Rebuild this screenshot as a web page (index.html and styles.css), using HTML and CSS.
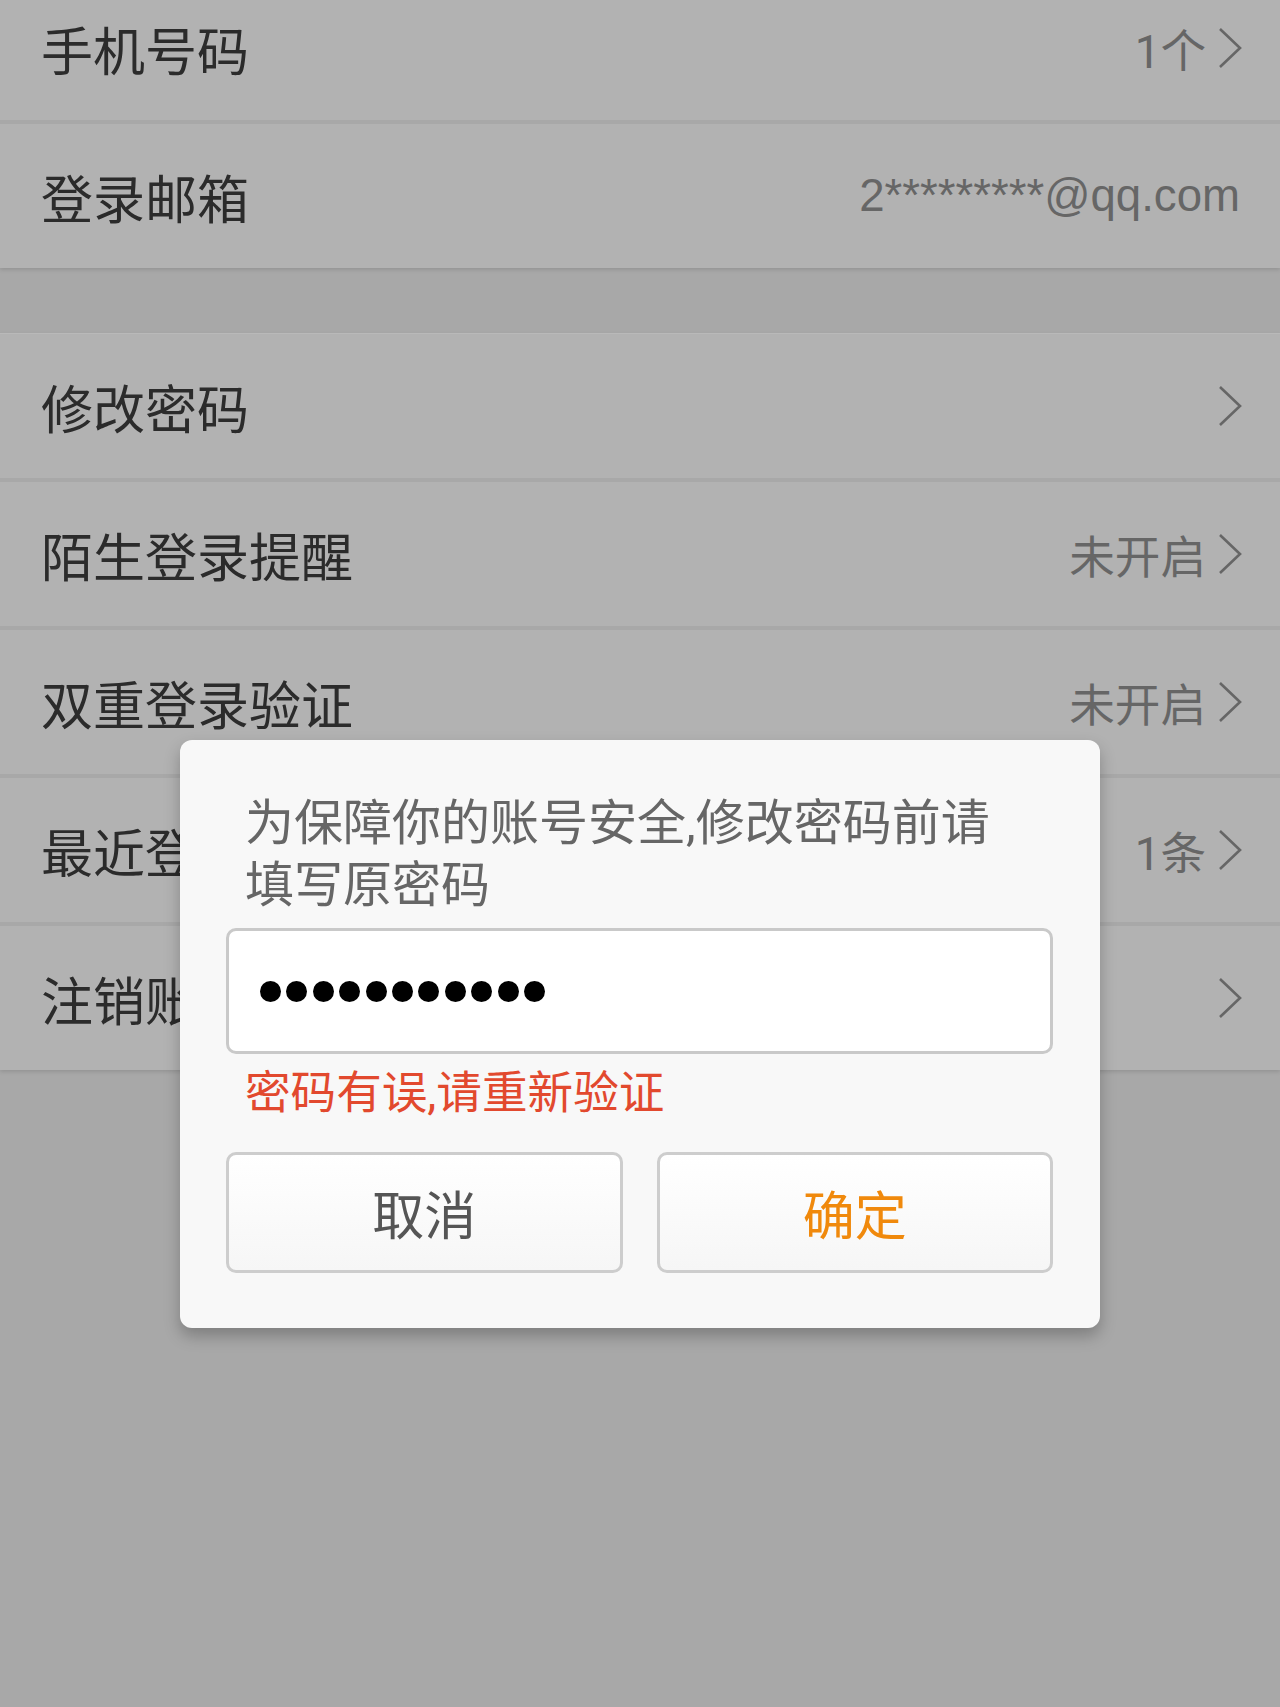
FILE: index.html
```html
<!DOCTYPE html>
<html lang="zh-CN">
<head>
    <meta charset="UTF-8">
    <title>账号安全</title>
    <link rel="stylesheet" href="styles.css">
</head>
<body>
    <div class="screen">
        <div class="group first">
            <div class="row">
                <span class="label">手机号码</span>
                <span class="value">1个</span>
                <svg class="arrow" viewBox="0 0 24 42"><polyline points="2,2 22,21 2,40"/></svg>
            </div>
            <div class="row">
                <span class="label">登录邮箱</span>
                <span class="value mail">2*********@qq.com</span>
            </div>
        </div>

        <div class="group">
            <div class="row">
                <span class="label">修改密码</span>
                <svg class="arrow" viewBox="0 0 24 42"><polyline points="2,2 22,21 2,40"/></svg>
            </div>
            <div class="row">
                <span class="label">陌生登录提醒</span>
                <span class="value">未开启</span>
                <svg class="arrow" viewBox="0 0 24 42"><polyline points="2,2 22,21 2,40"/></svg>
            </div>
            <div class="row">
                <span class="label">双重登录验证</span>
                <span class="value">未开启</span>
                <svg class="arrow" viewBox="0 0 24 42"><polyline points="2,2 22,21 2,40"/></svg>
            </div>
            <div class="row">
                <span class="label">最近登录设备</span>
                <span class="value">1条</span>
                <svg class="arrow" viewBox="0 0 24 42"><polyline points="2,2 22,21 2,40"/></svg>
            </div>
            <div class="row">
                <span class="label">注销账号</span>
                <svg class="arrow" viewBox="0 0 24 42"><polyline points="2,2 22,21 2,40"/></svg>
            </div>
        </div>
    </div>

    <!-- 修改密码前的验证弹窗 -->
    <div class="dialog">
        <p class="msg">为保障你的账号安全,修改密码前请填写原密码</p>
        <div class="pwd">
            <i></i><i></i><i></i><i></i><i></i><i></i><i></i><i></i><i></i><i></i><i></i>
        </div>
        <p class="error">密码有误,请重新验证</p>
        <div class="btns">
            <button class="btn cancel">取消</button>
            <button class="btn ok">确定</button>
        </div>
    </div>
</body>
</html>
```

FILE: styles.css
```css
body {
    margin: 0;
    background: #a8a8a8;
    font-family: Roboto, "Noto Sans CJK SC", sans-serif;
}
.screen {
    margin-top: -26px;
}
.group {
    background: #b2b2b2;
    border-top: 1px solid #b9b9b9;
    box-shadow: 0 2px 4px rgba(0, 0, 0, 0.12);
    margin-bottom: 65px;
}
.group.first {
    border-top: none;
    padding-top: 2px;
}
.row {
    height: 144px;
    display: flex;
    align-items: center;
    padding: 0 38px 0 41px;
    border-bottom: 4px solid #a8a8a8;
}
.row:last-child {
    border-bottom: none;
}
.label {
    flex: 1;
    font-size: 52px;
    color: #2b2b2b;
}
.value {
    font-size: 45.6px;
    color: #666;
}
.value.mail {
    margin-right: 2px;
    font-family: "Liberation Sans", Arial, sans-serif;
}
.arrow {
    width: 24px;
    height: 42px;
    margin-left: 12px;
}
.arrow polyline {
    fill: none;
    stroke: #666;
    stroke-width: 2.6;
}

.dialog {
    position: absolute;
    left: 180px;
    top: 740px;
    width: 920px;
    box-sizing: border-box;
    padding: 53px 47px 55px 46px;
    background: #f8f8f8;
    border-radius: 12px;
    box-shadow: 0 8px 16px rgba(0, 0, 0, 0.25);
}
.msg {
    margin: 0;
    padding: 0 38px 0 19px;
    font-size: 49px;
    line-height: 62px;
    color: #666;
}
.pwd {
    margin-top: 11px;
    height: 126px;
    box-sizing: border-box;
    border: 3px solid #c9c9c9;
    border-radius: 10px;
    background: #fff;
    display: flex;
    align-items: center;
    gap: 5.4px;
    padding-left: 31px;
}
.pwd i {
    width: 21px;
    height: 21px;
    border-radius: 50%;
    background: #000;
}
.error {
    margin: 10px 0 0;
    padding-left: 19px;
    font-size: 45.6px;
    line-height: 60px;
    color: #e2492e;
}
.btns {
    margin-top: 28px;
    display: flex;
    gap: 34px;
}
.btn {
    flex: 1;
    height: 121px;
    border: 3px solid #cdcdcd;
    border-radius: 10px;
    background: linear-gradient(#ffffff, #f6f6f6);
    font-family: Roboto, "Noto Sans CJK SC", sans-serif;
    font-size: 52px;
    padding: 0;
}
.btn.cancel {
    color: #555;
}
.btn.ok {
    color: #f0890c;
}
```
